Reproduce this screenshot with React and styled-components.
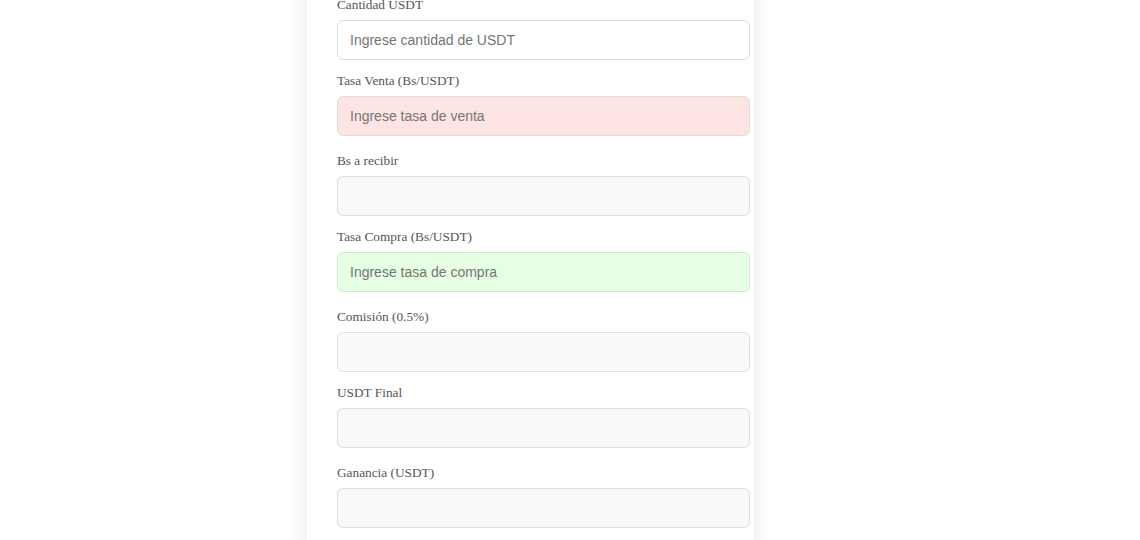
import React from 'react';
import styled, { createGlobalStyle } from 'styled-components';

const GlobalStyle = createGlobalStyle`
  html, body {
    margin: 0;
    padding: 0;
    background: #ffffff;
    overflow: hidden;
  }
`;

const Page = styled.div`
  display: flex;
  padding-left: 307px;
  height: 540px;
`;

const Card = styled.div`
  width: 387px;
  padding: 30px;
  margin-top: -33px;
  min-height: 640px;
  background: #ffffff;
  border-radius: 10px;
  box-shadow: 0 0 20px rgba(0, 0, 0, 0.1);
  display: flex;
  flex-direction: column;
  gap: 17px;
`;

const Pair = styled.div`
  display: flex;
  flex-direction: column;
  gap: 13px;
`;

const Group = styled.div`
  display: flex;
  flex-direction: column;
`;

const Label = styled.label`
  font-family: "Liberation Serif", "Times New Roman", serif;
  font-size: 13.3px;
  line-height: 15px;
  color: #555555;
  margin-bottom: 8px;
`;

const backgrounds = {
  plain: '#ffffff',
  sell: '#ffe4e4',
  buy: '#e5ffe5',
  readonly: '#f9f9f9',
};

const Input = styled.input`
  box-sizing: content-box;
  width: 100%;
  height: 38px;
  padding: 0 12px;
  margin: 0;
  border: 1px solid #dddddd;
  border-radius: 6px;
  background: ${(p) => backgrounds[p.$tone || 'plain']};
  font-family: "Liberation Sans", Arial, sans-serif;
  font-size: 14px;
  color: #333333;
  outline: none;

  &::placeholder {
    color: #757575;
  }
`;

const Field = ({ label, placeholder, tone }) => (
  <Group>
    <Label>{label}</Label>
    <Input
      type='text'
      placeholder={placeholder}
      $tone={tone}
      readOnly={tone === 'readonly'}
    />
  </Group>
);

const App = () => {
  return (
    <>
      <GlobalStyle />
      <Page>
        <Card>
          <Pair>
            <Field label='Cantidad USDT' placeholder='Ingrese cantidad de USDT' />
            <Field label='Tasa Venta (Bs/USDT)' placeholder='Ingrese tasa de venta' tone='sell' />
          </Pair>
          <Pair>
            <Field label='Bs a recibir' tone='readonly' />
            <Field label='Tasa Compra (Bs/USDT)' placeholder='Ingrese tasa de compra' tone='buy' />
          </Pair>
          <Pair>
            <Field label='Comisión (0.5%)' tone='readonly' />
            <Field label='USDT Final' tone='readonly' />
          </Pair>
          <Pair>
            <Field label='Ganancia (USDT)' tone='readonly' />
          </Pair>
        </Card>
      </Page>
    </>
  );
};

export default App;
